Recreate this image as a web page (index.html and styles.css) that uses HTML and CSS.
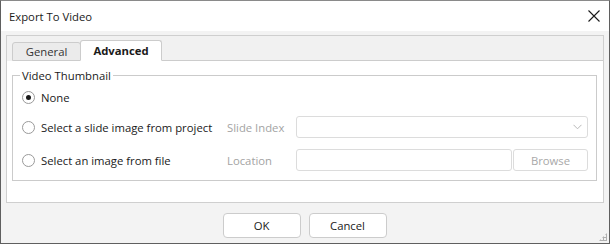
FILE: index.html
```html
<!DOCTYPE html>
<html lang="en">
<head>
    <meta charset="UTF-8">
    <title>Export To Video</title>
    <link rel="stylesheet" href="styles.css">
</head>
<body>

    <div class="window">
        <div class="titlebar">
            <span class="title">Export To Video</span>
            <svg class="close" width="12" height="12" viewBox="0 0 12 12">
                <path d="M0.5 0.5 L11.5 11.5 M11.5 0.5 L0.5 11.5" stroke="#1a1a1a" stroke-width="1.1" fill="none"/>
            </svg>
        </div>

        <div class="dialog-body">
            <div class="tabs">
                <div class="tab-strip">
                    <div class="tab general">General</div>
                    <div class="tab active">Advanced</div>
                    <div class="tab-fill"></div>
                </div>

                <div class="tab-panel">
                    <fieldset class="group">
                        <legend>Video Thumbnail</legend>

                        <div class="row first">
                            <label class="radio"><span class="dot checked"></span>None</label>
                        </div>

                        <div class="row second">
                            <label class="radio"><span class="dot"></span>Select a slide image from project</label>
                            <span class="field-label">Slide Index</span>
                            <div class="combo">
                                <svg width="9" height="6" viewBox="0 0 9 6">
                                    <path d="M0.5 0.8 L4.5 4.8 L8.5 0.8" stroke="#b8b8b8" stroke-width="1" fill="none"/>
                                </svg>
                            </div>
                        </div>

                        <div class="row">
                            <label class="radio"><span class="dot"></span>Select an image from file</label>
                            <span class="field-label">Location</span>
                            <div class="text-box"></div>
                            <button class="browse" disabled>Browse</button>
                        </div>
                    </fieldset>
                </div>
            </div>

            <div class="footer">
                <button class="btn">OK</button>
                <button class="btn">Cancel</button>
            </div>

            <div class="grip"></div>
        </div>
    </div>

</body>
</html>
```

FILE: styles.css
```css
* {
    box-sizing: border-box;
}

body {
    margin: 0;
    font-family: "Open Sans", "Noto Sans", sans-serif;
    font-size: 11.3px;
    color: #1a1a1a;
    background-color: #ffffff;
}

.window {
    width: 610px;
    height: 244px;
    border: 1px solid #5f5f5f;
    border-top-color: #8a8a8a;
    display: flex;
    flex-direction: column;
    background-color: #f3f3f3;
}

.titlebar {
    height: 30px;
    background-color: #ffffff;
    display: flex;
    align-items: center;
    justify-content: space-between;
    padding: 0 8px 0 8px;
}

.title {
    font-size: 11.3px;
}

.close {
    margin-right: 1px;
}

.dialog-body {
    flex: 1;
    position: relative;
    padding: 4px 5px 0 5px;
    display: flex;
    flex-direction: column;
}

.tabs {
    border: 1px solid #cfcfcf;
    height: 168px;
    display: flex;
    flex-direction: column;
}

.tab-strip {
    height: 25px;
    display: flex;
    align-items: flex-end;
    padding-left: 5px;
    background-color: #f1f1f1;
}

.tab {
    height: 19px;
    display: flex;
    align-items: center;
    justify-content: center;
    border: 1px solid #cccccc;
    border-bottom: 1px solid #cccccc;
    border-radius: 3px 3px 0 0;
    background-color: #ebebeb;
    color: #333;
}

.tab.general {
    width: 69px;
}

.tab.active {
    width: 82px;
    height: 21px;
    margin-left: -1px;
    padding-bottom: 1px;
    background-color: #ffffff;
    border-bottom-color: #ffffff;
    font-weight: bold;
    color: #1a1a1a;
}

.tab-fill {
    flex: 1;
    height: 1px;
    background-color: #cccccc;
}

.tab-panel {
    flex: 1;
    background-color: #ffffff;
    padding: 7px 6px 0 5px;
}

.group {
    margin: 0;
    height: 113px;
    border: 1px solid #cbcbcb;
    padding: 3px 0 0 9px;
    width: 585px;
}

.group legend {
    padding: 0 2px;
    margin-left: -2px;
    color: #1a1a1a;
}

.row {
    display: flex;
    align-items: center;
    height: 22px;
}

.row.first {
    margin-bottom: 8px;
}

.row.second {
    margin-bottom: 11px;
}

.radio {
    width: 205px;
    display: flex;
    align-items: center;
    gap: 6px;
    color: #1a1a1a;
}

.dot {
    width: 13px;
    height: 13px;
    border-radius: 50%;
    border: 1px solid #9a9a9a;
    background-color: #ffffff;
    display: flex;
    align-items: center;
    justify-content: center;
}

.dot.checked::after {
    content: "";
    width: 5px;
    height: 5px;
    border-radius: 50%;
    background-color: #1a1a1a;
}

.field-label {
    width: 69px;
    color: #a3a3a3;
}

.combo {
    width: 292px;
    height: 22px;
    border: 1px solid #dcdcdc;
    border-radius: 3px;
    display: flex;
    align-items: center;
    justify-content: flex-end;
    padding-right: 5px;
}

.text-box {
    width: 216px;
    height: 22px;
    border: 1px solid #dcdcdc;
    border-radius: 3px;
}

.browse {
    width: 75px;
    height: 22px;
    margin-left: 1px;
    border: 1px solid #dcdcdc;
    border-radius: 3px;
    background-color: #ffffff;
    color: #a8a8a8;
    font-family: inherit;
    font-size: 11.3px;
}

.footer {
    display: flex;
    justify-content: center;
    gap: 8px;
    padding-top: 10px;
    padding-right: 1px;
}

.btn {
    width: 78px;
    height: 25px;
    border: 1px solid #cccccc;
    border-radius: 4px;
    background-color: #ffffff;
    color: #1a1a1a;
    font-family: inherit;
    font-size: 11.3px;
}

.grip {
    position: absolute;
    right: 2px;
    bottom: 2px;
    width: 8px;
    height: 8px;
    background-image: radial-gradient(circle, #b0b0b0 1px, transparent 1.1px);
    background-size: 3px 3px;
    clip-path: polygon(100% 0, 100% 100%, 0 100%);
}
```
